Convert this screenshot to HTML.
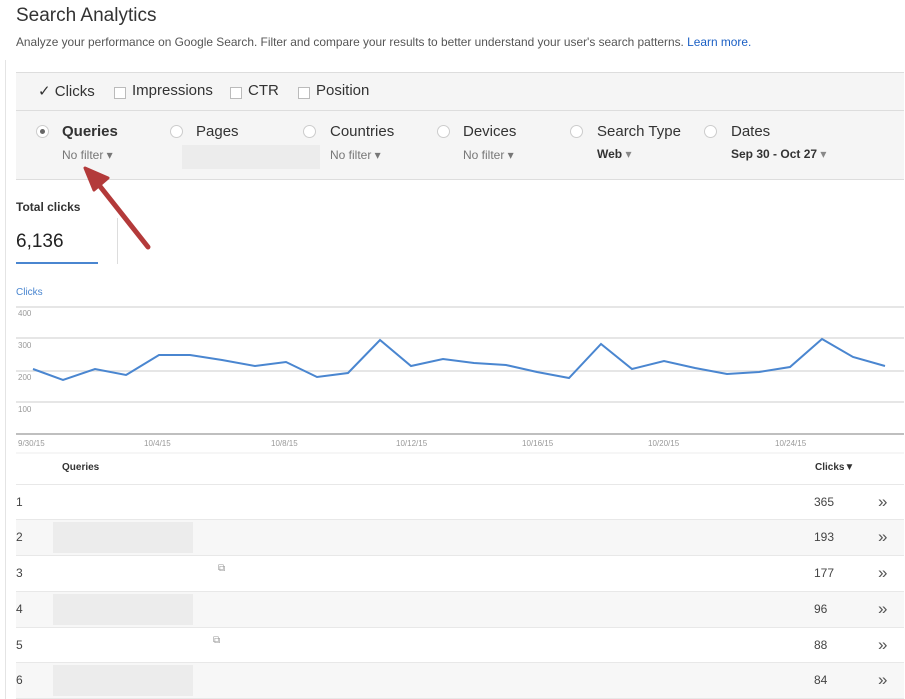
<!DOCTYPE html>
<html><head><style>
body{margin:0;width:905px;height:699px;overflow:hidden;background:#fff;font-family:"Liberation Sans",Arial,sans-serif;color:#222;position:relative}
.a{position:absolute;white-space:nowrap}
.rad{position:absolute;width:11px;height:11px;border:1px solid #ccc;border-radius:50%;background:#fff}
.cb{position:absolute;top:5px;width:10px;height:10px;border:1px solid #bbb;background:#fff}
.nf{font-size:12px;color:#777}
.row{position:absolute;left:16px;width:888px;height:35px;border-top:1px solid #e8e8e8;font-size:12px;color:#444}
.row span{position:absolute;top:10px}
.g{background:#f7f7f7}
.blur{position:absolute;left:37px;top:2px;width:140px;height:31px;background:#ececec}
.ax{font-size:8px;color:#999}
.ch{left:862px;top:7px!important;font-size:17px;color:#555}
</style></head><body>
<div class="a" style="left:16px;top:5px;font-size:19px;color:#333">Search Analytics</div>
<div class="a" style="left:16px;top:35px;font-size:11.9px;color:#555">Analyze your performance on Google Search. Filter and compare your results to better understand your user's search patterns. <span style="color:#1a5fc4">Learn more.</span></div>
<div class="a" style="left:5px;top:60px;width:1px;height:639px;background:#e4e4e4"></div>
<div class="a" style="left:16px;top:72px;width:888px;height:106px;background:#f5f5f5;border-top:1px solid #ddd;border-bottom:1px solid #ddd"></div>
<div class="a" style="left:16px;top:110px;width:888px;height:1px;background:#ddd"></div>
<div class="a" style="left:38px;top:82px;font-size:15px;color:#333;width:400px;height:20px">
<span class="a" style="left:0;top:0">✓ Clicks</span>
<span class="cb" style="left:76px"></span><span class="a" style="left:94px;top:0">Impressions</span>
<span class="cb" style="left:192px"></span><span class="a" style="left:210px;top:0">CTR</span>
<span class="cb" style="left:260px"></span><span class="a" style="left:278px;top:0">Position</span>
</div>
<div class="rad" style="left:36px;top:125px"><div style="width:5px;height:5px;background:#666;border-radius:50%;margin:3px"></div></div>
<div class="a" style="left:62px;top:123px;font-size:15px;font-weight:bold;color:#333">Queries</div>
<div class="a nf" style="left:62px;top:148px">No filter ▾</div>
<div class="rad" style="left:170px;top:125px"></div>
<div class="a" style="left:196px;top:123px;font-size:15px;color:#333">Pages</div>
<div class="a" style="left:182px;top:145px;width:138px;height:24px;background:#ececec"></div>
<div class="rad" style="left:303px;top:125px"></div>
<div class="a" style="left:330px;top:123px;font-size:15px;color:#333">Countries</div>
<div class="a nf" style="left:330px;top:148px">No filter ▾</div>
<div class="rad" style="left:437px;top:125px"></div>
<div class="a" style="left:463px;top:123px;font-size:15px;color:#333">Devices</div>
<div class="a nf" style="left:463px;top:148px">No filter ▾</div>
<div class="rad" style="left:570px;top:125px"></div>
<div class="a" style="left:597px;top:123px;font-size:15px;color:#333">Search Type</div>
<div class="a" style="left:597px;top:147px;font-size:12px;font-weight:bold;color:#333">Web <span style="font-weight:normal;color:#888">▾</span></div>
<div class="rad" style="left:704px;top:125px"></div>
<div class="a" style="left:731px;top:123px;font-size:15px;color:#333">Dates</div>
<div class="a" style="left:731px;top:147px;font-size:12px;font-weight:bold;color:#333">Sep 30 - Oct 27 <span style="font-weight:normal;color:#888">▾</span></div>
<div class="a" style="left:16px;top:200px;font-size:12px;font-weight:bold;color:#333">Total clicks</div>
<div class="a" style="left:16px;top:231px;font-size:19px;color:#222">6,136</div>
<div class="a" style="left:16px;top:262px;width:82px;height:2px;background:#4a86d0"></div>
<div class="a" style="left:117px;top:218px;width:1px;height:46px;background:#ddd"></div>
<div class="a" style="left:16px;top:287px;font-size:10px;color:#4a86d0">Clicks</div>
<svg class="a" style="left:0;top:0" width="905" height="470">
<g stroke="#ddd" stroke-width="1.5"><line x1="16" y1="307" x2="904" y2="307"/><line x1="16" y1="338" x2="904" y2="338"/><line x1="16" y1="371" x2="904" y2="371"/><line x1="16" y1="402" x2="904" y2="402"/></g>
<line x1="16" y1="434" x2="904" y2="434" stroke="#aaa" stroke-width="1.5"/>
<line x1="16" y1="453" x2="904" y2="453" stroke="#eee"/>
<polyline fill="none" stroke="#4a86d0" stroke-width="2" points="33,369 63,380 95,369 126,375 159,355 190,355 222,360 255,366 286,362 317,377 348,373 380,340 411,366 443,359 474,363 506,365 537,372 569,378 601,344 632,369 664,361 695,368 727,374 759,372 790,367 822,339 853,357 885,366"/>
<path d="M148 247 L95 180" stroke="#b33a3a" stroke-width="5" stroke-linecap="round"/>
<path d="M85 168 L108 178 L94 190 Z" fill="#b33a3a" stroke="#b33a3a" stroke-width="3" stroke-linejoin="round"/>
</svg>
<div class="a ax" style="left:18px;top:309px">400</div>
<div class="a ax" style="left:18px;top:341px">300</div>
<div class="a ax" style="left:18px;top:373px">200</div>
<div class="a ax" style="left:18px;top:405px">100</div>
<div class="a ax" style="left:18px;top:439px">9/30/15</div>
<div class="a ax" style="left:144px;top:439px">10/4/15</div>
<div class="a ax" style="left:271px;top:439px">10/8/15</div>
<div class="a ax" style="left:396px;top:439px">10/12/15</div>
<div class="a ax" style="left:522px;top:439px">10/16/15</div>
<div class="a ax" style="left:648px;top:439px">10/20/15</div>
<div class="a ax" style="left:775px;top:439px">10/24/15</div>
<div class="a" style="left:62px;top:462px;font-size:10px;font-weight:bold;color:#333">Queries</div>
<div class="a" style="left:815px;top:462px;font-size:10px;font-weight:bold;color:#333">Clicks▼</div>
<div class="row" style="top:484px"><span style="left:0">1</span><span style="left:798px">365</span><span class="ch">»</span></div>
<div class="row g" style="top:519px"><div class="blur"></div><span style="left:0">2</span><span style="left:798px">193</span><span class="ch">»</span></div>
<div class="row" style="top:555px"><span style="left:0">3</span><span style="left:202px;top:7px;font-size:10px;color:#999">⧉</span><span style="left:798px">177</span><span class="ch">»</span></div>
<div class="row g" style="top:591px"><div class="blur"></div><span style="left:0">4</span><span style="left:798px">96</span><span class="ch">»</span></div>
<div class="row" style="top:627px"><span style="left:0">5</span><span style="left:197px;top:7px;font-size:10px;color:#999">⧉</span><span style="left:798px">88</span><span class="ch">»</span></div>
<div class="row g" style="top:662px;border-bottom:1px solid #e8e8e8"><div class="blur"></div><span style="left:0">6</span><span style="left:798px">84</span><span class="ch">»</span></div>
</body></html>
